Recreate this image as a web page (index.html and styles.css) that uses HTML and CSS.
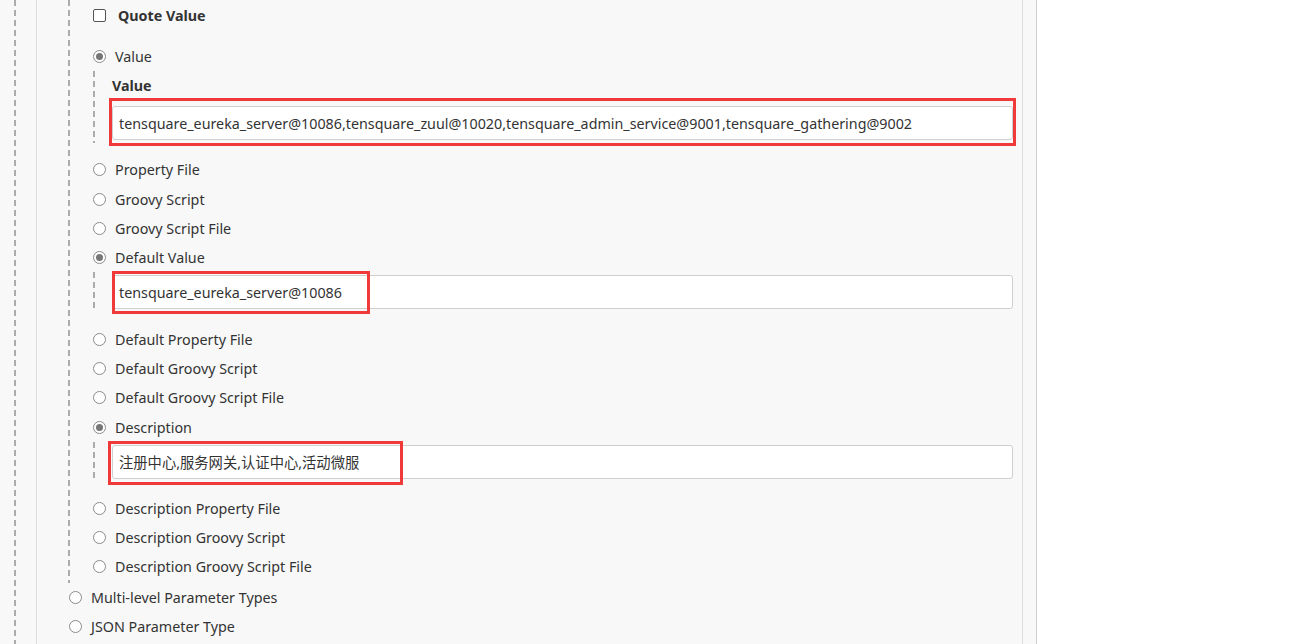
FILE: index.html
```html
<!DOCTYPE html>
<html lang="en">
<head>
    <meta charset="UTF-8">
    <title>Extended Choice Parameter</title>
    <link rel="stylesheet" href="styles.css">
</head>
<body>
    <div class="page">
        <div class="tree">
            <div class="panel">
                <div class="nested">
                    <div class="check-row">
                        <span class="checkbox"></span>
                        <span class="check-label">Quote Value</span>
                    </div>

                    <div class="opt"><span class="radio checked"></span>Value</div>
                    <div class="sub">
                        <div class="sub-label">Value</div>
                        <input class="text-input" type="text" value="tensquare_eureka_server@10086,tensquare_zuul@10020,tensquare_admin_service@9001,tensquare_gathering@9002">
                    </div>
                    <div class="opt"><span class="radio"></span>Property File</div>
                    <div class="opt"><span class="radio"></span>Groovy Script</div>
                    <div class="opt"><span class="radio"></span>Groovy Script File</div>

                    <div class="opt"><span class="radio checked"></span>Default Value</div>
                    <div class="sub">
                        <input class="text-input" type="text" value="tensquare_eureka_server@10086">
                    </div>
                    <div class="opt"><span class="radio"></span>Default Property File</div>
                    <div class="opt"><span class="radio"></span>Default Groovy Script</div>
                    <div class="opt"><span class="radio"></span>Default Groovy Script File</div>

                    <div class="opt"><span class="radio checked"></span>Description</div>
                    <div class="sub">
                        <input class="text-input" type="text" value="注册中心,服务网关,认证中心,活动微服">
                    </div>
                    <div class="opt"><span class="radio"></span>Description Property File</div>
                    <div class="opt"><span class="radio"></span>Description Groovy Script</div>
                    <div class="opt"><span class="radio"></span>Description Groovy Script File</div>
                </div>

                <div class="opt outer"><span class="radio"></span>Multi-level Parameter Types</div>
                <div class="opt outer"><span class="radio"></span>JSON Parameter Type</div>
            </div>
        </div>
    </div>

    <!-- annotation boxes drawn over the form -->
    <div class="mark mark-value"></div>
    <div class="mark mark-default"></div>
    <div class="mark mark-desc"></div>
</body>
</html>
```

FILE: styles.css
```css
* {
    margin: 0;
    padding: 0;
    box-sizing: border-box;
}

body {
    font-family: 'Noto Sans', 'Noto Sans CJK SC', sans-serif;
    font-size: 14.3px;
    color: #333;
    background: #fff;
    height: 644px;
    overflow: hidden;
    position: relative;
}

.page {
    width: 1037px;
    height: 644px;
    padding-left: 14px;
    background: #f8f8f8;
    border-right: 1px solid #cfcfcf;
}

.tree {
    height: 100%;
    padding-left: 22px;
    background: repeating-linear-gradient(to bottom, #acacac 0 6px, transparent 6px 10px) left top / 2px 100% no-repeat;
}

.panel {
    width: 987px;
    height: 100%;
    padding-left: 31px;
    padding-right: 9px;
    border-left: 1px solid #dedede;
    border-right: 1px solid #dedede;
}

.nested {
    padding-left: 25px;
    padding-bottom: 1px;
    background: repeating-linear-gradient(to bottom, #acacac 0 6px, transparent 6px 10px) left top / 2px 100% no-repeat;
}

.check-row {
    display: flex;
    align-items: center;
    height: 30px;
    margin-bottom: 12px;
}

.checkbox {
    width: 13px;
    height: 13px;
    border: 1px solid #555;
    border-radius: 2px;
    background: #fff;
    margin-right: 12px;
}

.check-label {
    font-weight: bold;
}

.opt {
    display: flex;
    align-items: center;
    height: 29.3px;
}

.opt.outer {
    padding-left: 1px;
}

.radio {
    position: relative;
    width: 13px;
    height: 13px;
    border: 1px solid #8a8a8a;
    border-radius: 50%;
    background: #fff;
    margin-right: 9px;
    flex-shrink: 0;
}

.radio.checked::after {
    content: '';
    position: absolute;
    left: 2px;
    top: 2px;
    width: 7px;
    height: 7px;
    border-radius: 50%;
    background: #767676;
}

.sub {
    padding: 3px 0 3px 19px;
    margin-bottom: 12px;
    background: repeating-linear-gradient(to bottom, #acacac 0 6px, transparent 6px 10px) left top / 2px 100% no-repeat;
}

.sub-label {
    font-weight: bold;
    line-height: 20px;
    margin-top: 2px;
    margin-bottom: 10px;
}

.text-input {
    display: block;
    width: 100%;
    height: 34px;
    padding: 0 6px;
    border: 1px solid #cfcfcf;
    border-radius: 3px;
    background: #fff;
    font-family: 'Noto Sans', 'Noto Sans CJK SC', sans-serif;
    font-size: 14.3px;
    color: #333;
}

.mark {
    position: absolute;
    border: 3px solid #f03a3a;
}

.mark-value {
    left: 109px;
    top: 98px;
    width: 907px;
    height: 48px;
}

.mark-default {
    left: 112px;
    top: 271px;
    width: 258px;
    height: 43px;
}

.mark-desc {
    left: 108px;
    top: 441px;
    width: 295px;
    height: 44px;
}
```
